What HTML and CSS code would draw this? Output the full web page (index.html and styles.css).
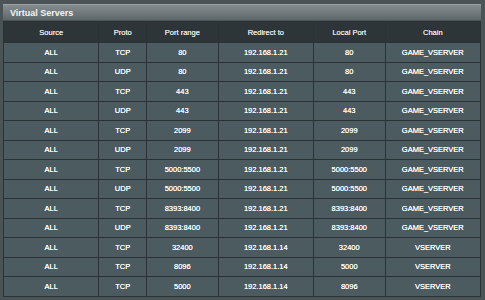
FILE: index.html
```html
<!DOCTYPE html>
<html>
<head>
<meta charset="utf-8">
<link rel="stylesheet" href="styles.css">
</head>
<body>
<div class="panel">
  <div class="title">Virtual Servers</div>
  <table class="vs">
    <colgroup>
      <col class="c20"><col class="c10"><col class="c15"><col class="c20"><col class="c15"><col class="c20">
    </colgroup>
    <thead>
      <tr><th>Source</th><th>Proto</th><th>Port range</th><th>Redirect to</th><th>Local Port</th><th>Chain</th></tr>
    </thead>
    <tbody>
      <tr><td>ALL</td><td>TCP</td><td>80</td><td>192.168.1.21</td><td>80</td><td>GAME_VSERVER</td></tr>
      <tr><td>ALL</td><td>UDP</td><td>80</td><td>192.168.1.21</td><td>80</td><td>GAME_VSERVER</td></tr>
      <tr><td>ALL</td><td>TCP</td><td>443</td><td>192.168.1.21</td><td>443</td><td>GAME_VSERVER</td></tr>
      <tr><td>ALL</td><td>UDP</td><td>443</td><td>192.168.1.21</td><td>443</td><td>GAME_VSERVER</td></tr>
      <tr><td>ALL</td><td>TCP</td><td>2099</td><td>192.168.1.21</td><td>2099</td><td>GAME_VSERVER</td></tr>
      <tr><td>ALL</td><td>UDP</td><td>2099</td><td>192.168.1.21</td><td>2099</td><td>GAME_VSERVER</td></tr>
      <tr><td>ALL</td><td>TCP</td><td>5000:5500</td><td>192.168.1.21</td><td>5000:5500</td><td>GAME_VSERVER</td></tr>
      <tr><td>ALL</td><td>UDP</td><td>5000:5500</td><td>192.168.1.21</td><td>5000:5500</td><td>GAME_VSERVER</td></tr>
      <tr><td>ALL</td><td>TCP</td><td>8393:8400</td><td>192.168.1.21</td><td>8393:8400</td><td>GAME_VSERVER</td></tr>
      <tr><td>ALL</td><td>UDP</td><td>8393:8400</td><td>192.168.1.21</td><td>8393:8400</td><td>GAME_VSERVER</td></tr>
      <tr><td>ALL</td><td>TCP</td><td>32400</td><td>192.168.1.14</td><td>32400</td><td>VSERVER</td></tr>
      <tr><td>ALL</td><td>TCP</td><td>8096</td><td>192.168.1.14</td><td>5000</td><td>VSERVER</td></tr>
      <tr><td>ALL</td><td>TCP</td><td>5000</td><td>192.168.1.14</td><td>8096</td><td>VSERVER</td></tr>
    </tbody>
  </table>
</div>
</body>
</html>
```
FILE: styles.css
```css
html, body {
  margin: 0;
  padding: 0;
  background: #4a5356;
}
body {
  font-family: "Liberation Sans", Arial, sans-serif;
  width: 485px;
  height: 300px;
  overflow: hidden;
}
.panel {
  padding: 4px 4px 0 3px;
}
.title {
  height: 16px;
  line-height: 16px;
  padding-left: 7px;
  font-size: 9px;
  font-weight: bold;
  color: #f2f4f5;
  background: linear-gradient(#858d90, #5d6669);
  border-top: 1px solid #9aa1a4;
  box-sizing: border-box;
  margin-bottom: 1px;
}
.vs {
  width: 478px;
  border-collapse: collapse;
  table-layout: fixed;
  font-size: 7.5px;
}
.c20 { width: 20%; }
.c10 { width: 10%; }
.c15 { width: 15%; }
.vs th, .vs td {
  border: 1px solid #2a3235;
  text-align: center;
  padding: 0;
}
.vs th {
  height: 20px;
  background: #2d3538;
  color: #e4e8ea;
  font-weight: normal;
  text-shadow: 0 0 0.4px #e4e8ea;
}
.vs td {
  height: 18.5px;
  background: #4b5b5f;
  color: #ffffff;
  text-shadow: 0 0 0.5px #ffffff;
}
```
